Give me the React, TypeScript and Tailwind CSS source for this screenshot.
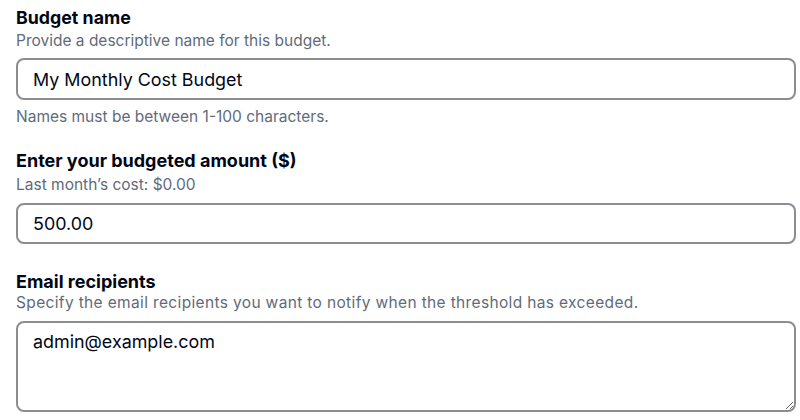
import React from "react";

export default function App() {
  return (
    <div className="flex h-[420px] w-[800px] flex-col overflow-hidden bg-white pl-4 pr-[4px] font-['Inter','Noto_Sans',sans-serif] text-[#000716]">
      <label className="pt-[7px] text-[17.8px] font-bold leading-[22px]">Budget name</label>
      <p className="mt-[2px] text-[15.5px] leading-[20px] text-[#5f6b7a]">
        Provide a descriptive name for this budget.
      </p>
      <input
        readOnly
        defaultValue="My Monthly Cost Budget"
        className="mt-[7px] h-[42px] w-full rounded-[8px] border-2 border-[#8c8c94] bg-white px-[15px] text-[17.9px] text-[#000716] outline-none"
      />
      <p className="mt-[7px] text-[15.5px] leading-[20px] text-[#5f6b7a]">
        Names must be between 1-100 characters.
      </p>

      <label className="mt-[23px] text-[18px] font-bold leading-[22px]">
        Enter your budgeted amount ($)
      </label>
      <p className="mt-[3px] text-[15.5px] leading-[20px] text-[#5f6b7a]">
        Last month’s cost: $0.00
      </p>
      <input
        readOnly
        defaultValue="500.00"
        className="mt-[8px] h-[41px] w-full rounded-[8px] border-2 border-[#8c8c94] bg-white px-[15px] text-[17.9px] text-[#000716] outline-none"
      />

      <label className="mt-[27px] text-[18px] font-bold leading-[22px]">Email recipients</label>
      <p className="text-[15.5px] leading-[20px] tracking-[0.35px] text-[#5f6b7a]">
        Specify the email recipients you want to notify when the threshold has exceeded.
      </p>
      <textarea
        readOnly
        defaultValue="admin@example.com"
        className="mt-[8px] h-[91px] w-full rounded-[8px] border-2 border-[#8c8c94] bg-white px-[15px] pt-[7px] text-[17.9px] leading-[24px] text-[#000716] outline-none"
      />
    </div>
  );
}
